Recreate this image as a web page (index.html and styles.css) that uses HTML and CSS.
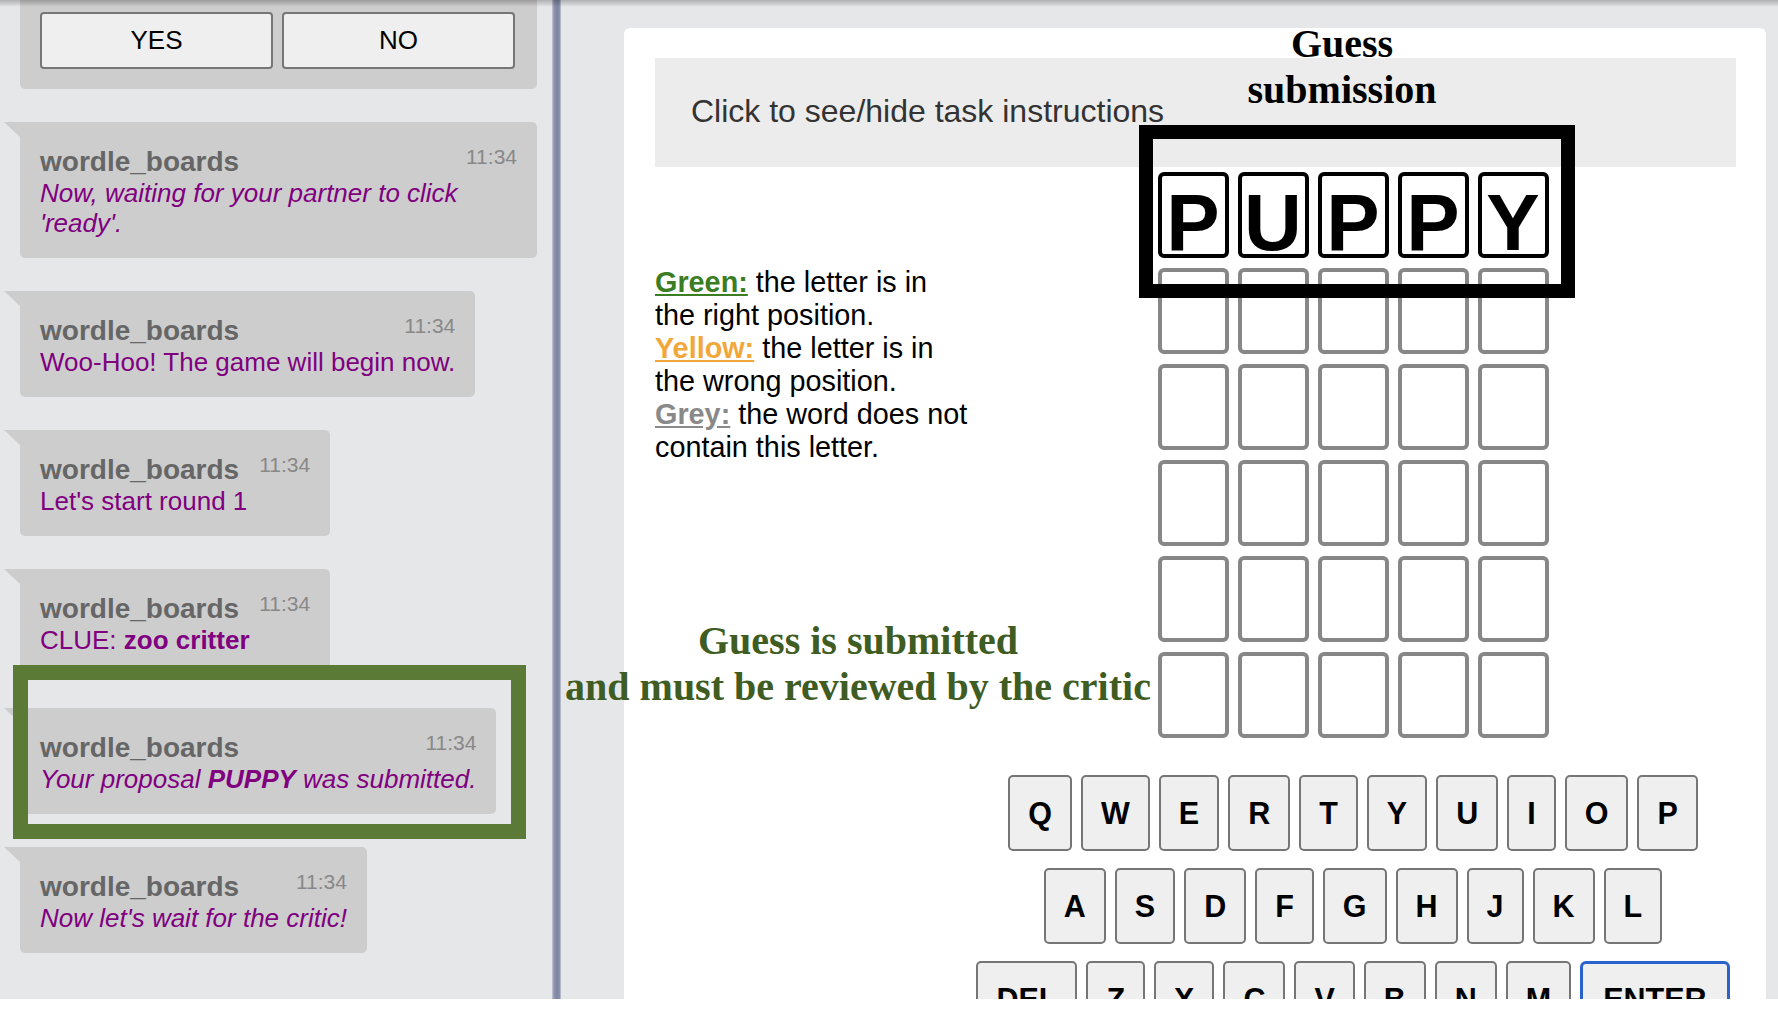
FILE: index.html
```html
<!DOCTYPE html>
<html lang="en">
<head>
<meta charset="utf-8">
<title>Wordle boards</title>
<link rel="stylesheet" href="styles.css">
</head>
<body>
<div class="app">
  <aside class="chat">
    <div class="ready-box">
      <button class="btn">YES</button>
      <button class="btn">NO</button>
    </div>
    <div class="msg">
      <div class="msg-head"><span class="name">wordle_boards</span><span class="time">11:34</span></div>
      <div class="text it">Now, waiting for your partner to click 'ready'.</div>
    </div>
    <div class="msg">
      <div class="msg-head"><span class="name">wordle_boards</span><span class="time">11:34</span></div>
      <div class="text">Woo-Hoo! The game will begin now.</div>
    </div>
    <div class="msg">
      <div class="msg-head"><span class="name">wordle_boards</span><span class="time">11:34</span></div>
      <div class="text">Let's start round 1</div>
    </div>
    <div class="msg">
      <div class="msg-head"><span class="name">wordle_boards</span><span class="time">11:34</span></div>
      <div class="text">CLUE: <b>zoo critter</b></div>
    </div>
    <div class="msg">
      <div class="msg-head"><span class="name">wordle_boards</span><span class="time">11:34</span></div>
      <div class="text it">Your proposal <b>PUPPY</b> was submitted.</div>
    </div>
    <div class="msg">
      <div class="msg-head"><span class="name">wordle_boards</span><span class="time">11:34</span></div>
      <div class="text it">Now let's wait for the critic!</div>
    </div>
  </aside>
  <div class="divider"></div>
  <main class="main">
    <section class="card">
      <div class="instructions">Click to see/hide task instructions</div>
      <div class="board-area">
        <div class="legend">
          <b class="c-green">Green:</b> the letter is in<br>the right position.<br>
          <b class="c-yellow">Yellow:</b> the letter is in<br>the wrong position.<br>
          <b class="c-grey">Grey:</b> the word does not<br>contain this letter.
        </div>
        <div class="game">
          <div class="grid">
            <div class="cell filled">P</div><div class="cell filled">U</div><div class="cell filled">P</div><div class="cell filled">P</div><div class="cell filled">Y</div>
            <div class="cell"></div><div class="cell"></div><div class="cell"></div><div class="cell"></div><div class="cell"></div>
            <div class="cell"></div><div class="cell"></div><div class="cell"></div><div class="cell"></div><div class="cell"></div>
            <div class="cell"></div><div class="cell"></div><div class="cell"></div><div class="cell"></div><div class="cell"></div>
            <div class="cell"></div><div class="cell"></div><div class="cell"></div><div class="cell"></div><div class="cell"></div>
            <div class="cell"></div><div class="cell"></div><div class="cell"></div><div class="cell"></div><div class="cell"></div>
          </div>
          <div class="keyboard">
            <div class="krow">
              <button class="key">Q</button><button class="key">W</button><button class="key">E</button><button class="key">R</button><button class="key">T</button><button class="key">Y</button><button class="key">U</button><button class="key">I</button><button class="key">O</button><button class="key">P</button>
            </div>
            <div class="krow">
              <button class="key">A</button><button class="key">S</button><button class="key">D</button><button class="key">F</button><button class="key">G</button><button class="key">H</button><button class="key">J</button><button class="key">K</button><button class="key">L</button>
            </div>
            <div class="krow">
              <button class="key">DEL</button><button class="key">Z</button><button class="key">X</button><button class="key">C</button><button class="key">V</button><button class="key">B</button><button class="key">N</button><button class="key">M</button><button class="key enter">ENTER</button>
            </div>
          </div>
        </div>
      </div>
    </section>
  </main>

  <div class="frame frame-black"></div>
  <div class="frame frame-green"></div>
  <div class="note note-guess">Guess<br>submission</div>
  <div class="note note-critic">Guess is submitted<br>and must be reviewed by the critic</div>
</div>
</body>
</html>
```
FILE: styles.css
```css
html, body {
  margin: 0;
  padding: 0;
  background: #ffffff;
}

body {
  font-family: "Liberation Sans", Arial, sans-serif;
}

.app {
  position: relative;
  display: flex;
  height: 999px;
  overflow: hidden;
  background: #e6e7e9;
}

.app::before {
  content: "";
  position: absolute;
  left: 0;
  right: 0;
  top: 0;
  height: 7px;
  background: linear-gradient(rgba(0, 0, 0, 0.24), rgba(0, 0, 0, 0));
  z-index: 10;
  pointer-events: none;
}

/* ---------- chat ---------- */
.chat {
  flex: none;
  width: 552px;
  box-sizing: border-box;
  padding: 0 15px 0 20px;
  display: flex;
  flex-direction: column;
  align-items: flex-start;
  gap: 33px;
}

.ready-box {
  align-self: stretch;
  display: flex;
  gap: 9px;
  padding: 12px 22px 20px 20px;
  background: #cdcdcd;
  border-radius: 0 0 5px 5px;
}

.btn {
  flex: 1;
  height: 57px;
  margin: 0;
  background: #efefef;
  border: 2px solid #767676;
  border-radius: 4px;
  font-family: "Liberation Sans", Arial, sans-serif;
  font-size: 26px;
  color: #000;
}

.msg {
  position: relative;
  box-sizing: border-box;
  max-width: 100%;
  padding: 24px 20px 20px;
  background: #cdcdcd;
  border-radius: 0 5px 5px 5px;
}

.msg::before {
  content: "";
  position: absolute;
  left: -16px;
  top: 0;
  border-top: 15px solid #cdcdcd;
  border-left: 16px solid transparent;
}

.msg-head {
  display: flex;
  justify-content: space-between;
  align-items: flex-start;
  gap: 20px;
  height: 32px;
}

.name {
  font-size: 28px;
  line-height: 31px;
  font-weight: bold;
  color: #666666;
}

.time {
  font-size: 21px;
  line-height: 22px;
  color: #888888;
}

.text {
  font-size: 26px;
  line-height: 30px;
  color: #800080;
}

.text.it {
  font-style: italic;
}

/* ---------- divider ---------- */
.divider {
  flex: none;
  width: 9px;
  background: linear-gradient(to right, #c3c6d2, #8a91ad 25%, #7e86a5 60%, #8c92ab 85%, #c9ccd6);
}

/* ---------- main ---------- */
.main {
  flex: 1;
  padding: 28px 12px 0 63px;
}

.card {
  min-height: 1100px;
  box-sizing: border-box;
  padding: 30px 30px 0 31px;
  background: #ffffff;
  border-radius: 6px 6px 0 0;
}

.instructions {
  height: 109px;
  box-sizing: border-box;
  padding: 35px 36px;
  background: #ececec;
  font-size: 32px;
  line-height: 37px;
  color: #333333;
}

.board-area {
  display: flex;
}

.legend {
  flex: none;
  width: 315px;
  padding-top: 99px;
  font-size: 28.8px;
  line-height: 33px;
  color: #000;
  white-space: nowrap;
}

.legend b {
  text-decoration: underline;
}

.c-green { color: #3b7d23; }
.c-yellow { color: #f2a73b; }
.c-grey { color: #898989; }

.game {
  flex: 1;
  display: flex;
  flex-direction: column;
  align-items: center;
  padding-top: 5px;
}

.grid {
  display: grid;
  grid-template-columns: repeat(5, 71px);
  grid-auto-rows: 86px;
  gap: 10px 9px;
}

.cell {
  box-sizing: border-box;
  border: 4px solid #878787;
  border-radius: 6px;
}

.cell.filled {
  border-color: #000;
  padding-top: 7px;
  font-size: 80px;
  line-height: 80px;
  font-weight: bold;
  text-align: center;
  color: #000;
}

.keyboard {
  margin-top: 37px;
  display: flex;
  flex-direction: column;
  align-items: center;
  gap: 17px;
}

.krow {
  display: flex;
  gap: 9px;
}

.key {
  height: 76px;
  margin: 0;
  padding: 0 18px;
  background: #efefef;
  border: 2px solid #767676;
  border-radius: 5px;
  font-family: "Liberation Sans", Arial, sans-serif;
  font-size: 30.5px;
  font-weight: bold;
  color: #000;
}

.key.enter {
  border: 3px solid #2a63cc;
  border-radius: 6px;
  padding: 0 20px;
}

/* ---------- annotations ---------- */
.frame {
  position: absolute;
  box-sizing: border-box;
  pointer-events: none;
}

.frame-black {
  left: 1139px;
  top: 125px;
  width: 436px;
  height: 173px;
  border: 14px solid #000;
}

.frame-green {
  left: 13px;
  top: 665px;
  width: 513px;
  height: 174px;
  border: 15px solid #5a7a36;
}

.note {
  position: absolute;
  font-family: "Liberation Serif", "Times New Roman", serif;
  font-weight: bold;
  font-size: 40px;
  line-height: 46px;
  text-align: center;
  white-space: nowrap;
}

.note-guess {
  left: 1192px;
  top: 21px;
  width: 300px;
  color: #000;
}

.note-critic {
  left: 558px;
  top: 618px;
  width: 600px;
  color: #3f5c22;
}
```
